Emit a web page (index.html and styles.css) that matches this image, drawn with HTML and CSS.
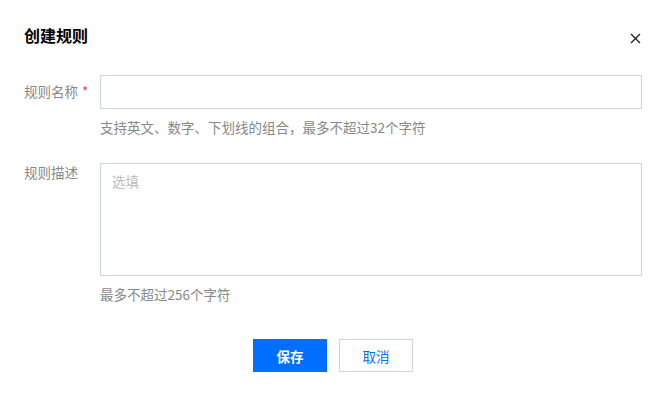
FILE: index.html
```html
<!DOCTYPE html>
<html lang="zh-CN">
<head>
  <meta charset="UTF-8">
  <title>创建规则</title>
  <link rel="stylesheet" href="styles.css">
</head>
<body>

  <div class="dialog">
    <div class="dialog-header">
      <h2 class="dialog-title">创建规则</h2>
      <button class="dialog-close" type="button" aria-label="关闭">
        <svg width="11" height="11" viewBox="0 0 11 11">
          <path d="M1 1L10 10M10 1L1 10" stroke="#222" stroke-width="1.4" fill="none"/>
        </svg>
      </button>
    </div>

    <form class="dialog-body">
      <div class="form-row">
        <label class="form-label" for="name">规则名称<span class="required">*</span></label>
        <div class="form-control">
          <input type="text" id="name" class="text-input">
          <p class="form-help">支持英文、数字、下划线的组合，最多不超过32个字符</p>
        </div>
      </div>

      <div class="form-row">
        <label class="form-label form-label-top" for="desc">规则描述</label>
        <div class="form-control">
          <textarea id="desc" class="text-area" placeholder="选填"></textarea>
          <p class="form-help">最多不超过256个字符</p>
        </div>
      </div>

      <div class="dialog-footer">
        <button type="submit" class="btn btn-primary">保存</button>
        <button type="button" class="btn btn-default">取消</button>
      </div>
    </form>
  </div>

</body>
</html>
```

FILE: styles.css
```css
body {
  margin: 0;
  background: #fff;
  font-family: "Noto Sans CJK SC", "Noto Sans", sans-serif;
  font-size: 13.5px;
  color: #000;
}
.dialog {
  padding: 24px 24px 0 24px;
}
.dialog-header {
  display: flex;
  justify-content: space-between;
  align-items: center;
  height: 22px;
}
.dialog-title {
  margin: 0;
  font-size: 16px;
  font-weight: bold;
  line-height: 22px;
}
.dialog-close {
  border: none;
  background: none;
  padding: 0;
  margin-top: 6px;
  margin-right: 1px;
  width: 12px;
  height: 12px;
  display: flex;
  align-items: center;
  justify-content: center;
  cursor: pointer;
}
.dialog-body {
  margin-top: 29px;
}
.form-row {
  display: grid;
  grid-template-columns: 76px 1fr;
  margin-bottom: 27px;
}
.form-label {
  color: #888;
  font-size: 13.5px;
  line-height: 33px;
}
.form-label-top {
  line-height: 18px;
}
.required {
  color: #e54545;
  margin-left: 4px;
}
.text-input, .text-area {
  display: block;
  box-sizing: border-box;
  width: 100%;
  border: 1px solid #cfd5de;
  border-radius: 0;
  font-family: inherit;
  font-size: 13.5px;
  margin: 0;
  outline: none;
}
.text-input {
  height: 34px;
  padding: 0 10px;
}
.text-area {
  height: 113px;
  padding: 7px 11px;
  resize: none;
}
.text-area::placeholder {
  color: #bbb;
}
.form-help {
  margin: 9px 0 0 0;
  color: #888;
  font-size: 13.5px;
  line-height: 18px;
}
.dialog-footer {
  display: flex;
  justify-content: center;
  gap: 12px;
  margin-top: 36px;
}
.btn {
  width: 74px;
  height: 33px;
  font-family: inherit;
  font-size: 13.5px;
  border-radius: 0;
  cursor: pointer;
}
.btn-primary {
  background: #006eff;
  color: #fff;
  border: none;
  font-weight: bold;
}
.btn-default {
  background: #fff;
  color: #006eff;
  border: 1px solid #cfd5de;
}
```
